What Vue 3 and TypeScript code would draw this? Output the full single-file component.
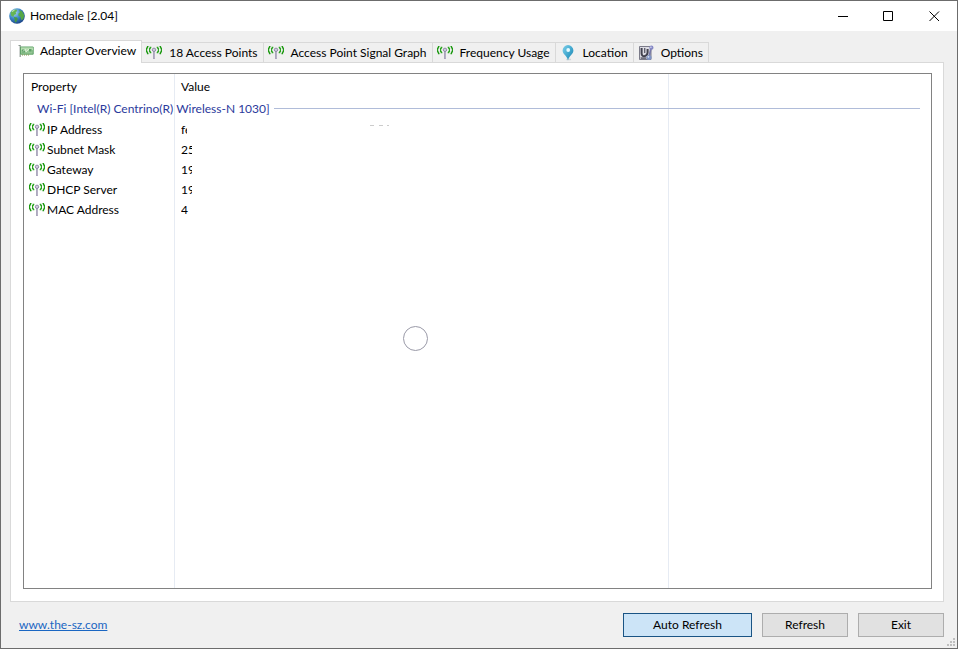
<script setup lang="ts">
import { ref } from 'vue'

interface Tab {
  label: string
  icon: 'card' | 'antenna' | 'pin' | 'options'
}

interface Property {
  name: string
  value: string
  size: 'narrow' | 'wide'
}

const tabs: Tab[] = [
  { label: 'Adapter Overview', icon: 'card' },
  { label: '18 Access Points', icon: 'antenna' },
  { label: 'Access Point Signal Graph', icon: 'antenna' },
  { label: 'Frequency Usage', icon: 'antenna' },
  { label: 'Location', icon: 'pin' },
  { label: 'Options', icon: 'options' },
]

const properties: Property[] = [
  { name: 'IP Address', value: 'fe', size: 'narrow' },
  { name: 'Subnet Mask', value: '25', size: 'wide' },
  { name: 'Gateway', value: '19', size: 'wide' },
  { name: 'DHCP Server', value: '19', size: 'wide' },
  { name: 'MAC Address', value: '4', size: 'wide' },
]

const active = ref(0)
const autoRefresh = ref(true)
</script>

<template>
  <div class="window">
    <svg class="symbols" aria-hidden="true">
      <symbol id="antenna" viewBox="0 0 16 16">
        <path d="M2.5 1.5H1.5V3H.6V7H1.5V8.6H2.5M13.5 1.5H14.5V3H15.4V7H14.5V8.6H13.5" fill="none" stroke="#1f9a14" stroke-width="1.2" />
        <path d="M5.3 2.3H4.2V3.5H3.6V6.5H4.2V7.7H5.3M10.7 2.3H11.8V3.5H12.4V6.5H11.8V7.7H10.7" fill="none" stroke="#2ba520" stroke-width="1.2" />
        <path d="M8 6V14" stroke="#9a94ae" stroke-width="1.7" />
        <path d="M8.3 6V13.5" stroke="#c4c0d2" stroke-width=".6" />
        <circle cx="8" cy="4.8" r="1.7" fill="#d0cddd" stroke="#8984a0" stroke-width=".9" />
      </symbol>
      <symbol id="card" viewBox="0 0 16 16">
        <path d="M.5 2.5H2.2V14" fill="none" stroke="#8b9790" stroke-width="1.2" />
        <path d="M2.5 4H15.2V11.2H2.5Z" fill="#94c694" stroke="#5fa268" />
        <path d="M3 4.5H15V7L8 8L3 7Z" fill="#b5dcb0" />
        <path d="M4 6.5H7V9.5H4ZM11 6H13.5V8.5H11Z" fill="#5fa169" />
        <path d="M5 8.5L7.5 6L8 9L11 6" fill="none" stroke="#d9eed5" />
        <path d="M4 12H12" stroke="#87974e" stroke-dasharray="1 1" />
      </symbol>
      <symbol id="pin" viewBox="0 0 16 16">
        <defs>
          <linearGradient id="drop" x1="0" y1="0" x2="1" y2="1">
            <stop offset="0" stop-color="#7fd0ea" />
            <stop offset=".55" stop-color="#3fa6cd" />
            <stop offset="1" stop-color="#1f7fa8" />
          </linearGradient>
        </defs>
        <ellipse cx="8.6" cy="14.4" rx="2.6" ry=".9" fill="#cfd5d9" />
        <path d="M8 15.4C7.4 13 6.4 11.8 4.9 10C3.6 8.5 2.6 7.4 2.6 5.5A5.4 5.4 0 0 1 13.4 5.5C13.4 7.4 12.4 8.5 11.1 10C9.6 11.8 8.6 13 8 15.4Z" fill="url(#drop)" />
        <circle cx="8.2" cy="5" r="1.9" fill="#e7fbff" />
      </symbol>
      <symbol id="options" viewBox="0 0 16 16">
        <path d="M1.5 1.5H13V14.5H1.5Z" fill="#b4b4bf" stroke="#7b7b89" />
        <path d="M2 2H12V12H2Z" fill="#dcdce3" />
        <path d="M3.6 3V8.5C3.6 10.5 5 11.5 7 11C8.6 10.6 9.4 9.4 9.6 7.5V4" fill="none" stroke="#42424f" stroke-width="2" />
        <path d="M6.7 3V8M3 13.2H8" stroke="#5c5c6b" stroke-width="1.3" />
        <path d="M13 3L11 12" stroke="#7778a8" stroke-width="1.6" />
        <circle cx="13.4" cy="2.7" r="2.1" fill="#8588c4" />
        <circle cx="11" cy="12.5" r="2.5" fill="#7f94c4" />
        <circle cx="12.9" cy="2.2" r=".8" fill="#d8daf3" />
        <circle cx="10.4" cy="11.8" r=".9" fill="#d8e4f6" />
      </symbol>
    </svg>

    <header class="titlebar">
      <svg class="globe" viewBox="0 0 16 16" aria-hidden="true">
        <defs>
          <radialGradient id="sea" cx="35%" cy="28%" r="75%">
            <stop offset="0" stop-color="#b4dcf6" />
            <stop offset=".5" stop-color="#3f8bc9" />
            <stop offset="1" stop-color="#1c4589" />
          </radialGradient>
        </defs>
        <circle cx="8" cy="8" r="7.8" fill="url(#sea)" />
        <path d="M1.6 4.5L4 2L7.5 1.5L8.2 3L6.7 4.2L7.2 6L5 7L4.5 9L2.2 7.8Z" fill="#65b553" />
        <path d="M5 9L8 9.5L8.8 11L7 14.5L5.8 14L5.6 11.3Z" fill="#479a42" />
        <path d="M10 2L13 3.3L15.2 7L14.4 11L12.5 12.3L11.4 9L9.3 7.5L9.5 5.4L11 4.2Z" fill="#55a746" />
        <path d="M3 3.5L5.5 2.2" stroke="#d1efbe" />
      </svg>
      <h1>Homedale [2.04]</h1>
      <button class="caption" type="button" aria-label="Minimize">
        <svg viewBox="0 0 11 11"><path d="M1 5.5H11" /></svg>
      </button>
      <button class="caption" type="button" aria-label="Maximize">
        <svg viewBox="0 0 11 11"><path d="M.5 .5H9.5V9.5H.5Z" /></svg>
      </button>
      <button class="caption" type="button" aria-label="Close">
        <svg viewBox="0 0 11 11"><path d="M.5 .5L10 10M10 .5L.5 10" /></svg>
      </button>
    </header>

    <main>
      <div class="tabs" role="tablist">
        <button
          v-for="(tab, i) in tabs"
          :key="tab.label"
          type="button"
          role="tab"
          class="tab"
          :class="{ active: active === i }"
          :aria-selected="active === i"
          @click="active = i"
        >
          <svg class="icon" aria-hidden="true"><use :href="'#' + tab.icon" /></svg>
          <span>{{ tab.label }}</span>
        </button>
      </div>

      <section class="panel" role="tabpanel">
        <div class="list">
          <table>
            <colgroup>
              <col class="col-property" />
              <col class="col-value" />
              <col />
            </colgroup>
            <thead>
              <tr>
                <th scope="col">Property</th>
                <th scope="col">Value</th>
                <td></td>
              </tr>
            </thead>
            <tbody>
              <tr class="group">
                <th colspan="3" scope="rowgroup">
                  <div class="group-title">Wi-Fi [Intel(R) Centrino(R) Wireless-N 1030]</div>
                </th>
              </tr>
              <tr v-for="item in properties" :key="item.name">
                <td>
                  <div class="name">
                    <svg class="icon" aria-hidden="true"><use href="#antenna" /></svg>
                    <span>{{ item.name }}</span>
                  </div>
                </td>
                <td><div class="value" :class="item.size">{{ item.value }}</div></td>
                <td></td>
              </tr>
            </tbody>
          </table>
          <svg class="specks" viewBox="0 0 20 2" aria-hidden="true">
            <path d="M1 .5H5M10 .5H14M18 .5H20" />
          </svg>
          <div class="ring"></div>
        </div>
      </section>
    </main>

    <footer>
      <a href="#">www.the-sz.com</a>
      <button
        type="button"
        class="push auto"
        :class="{ pressed: autoRefresh }"
        :aria-pressed="autoRefresh"
        @click="autoRefresh = !autoRefresh"
      >Auto Refresh</button>
      <button type="button" class="push">Refresh</button>
      <button type="button" class="push">Exit</button>
    </footer>

    <svg class="grip" viewBox="0 0 8 8" aria-hidden="true">
      <path d="M6 0h2v2H6zM3 3h2v2H3zM6 3h2v2H6zM0 6h2v2H0zM3 6h2v2H3zM6 6h2v2H6z" />
    </svg>
  </div>
</template>

<style>
body {
  margin: 0;
}
</style>

<style scoped>
.window {
  position: relative;
  box-sizing: border-box;
  display: flex;
  flex-direction: column;
  min-height: 100vh;
  border: 1px solid #6c6c6c;
  background: #f0f0f0;
  color: #000;
  font: 12px/16px "Segoe UI", Lato, "Open Sans", sans-serif;
}

.symbols {
  position: absolute;
  width: 0;
  height: 0;
}

button {
  box-sizing: border-box;
  margin: 0;
  padding: 0;
  border: 0;
  background: none;
  color: inherit;
  font: inherit;
}

.icon {
  flex: none;
  width: 16px;
  height: 16px;
}

.titlebar {
  display: flex;
  align-items: center;
  height: 30px;
  padding-left: 8px;
  background: #fff;
}

.globe {
  width: 16px;
  height: 16px;
}

h1 {
  flex: 1;
  margin: 0 0 0 5px;
  font: inherit;
}

.caption {
  display: flex;
  align-items: center;
  justify-content: center;
  width: 46px;
  height: 30px;
}

.caption svg {
  width: 11px;
  height: 11px;
  fill: none;
  stroke: #000;
}

main {
  flex: 1;
  display: flex;
  flex-direction: column;
  padding: 9px 13px 0 9px;
}

.tabs {
  display: flex;
  align-items: flex-end;
}

.tab {
  display: flex;
  align-items: center;
  gap: 7px;
  height: 20px;
  padding: 0 5px 0 4px;
  border: 1px solid #d9d9d9;
  border-width: 1px 1px 0 0;
  white-space: nowrap;
}

.tab.active {
  z-index: 1;
  gap: 6px;
  height: 23px;
  margin-bottom: -1px;
  padding: 0 5px 2px 7px;
  border-left-width: 1px;
  background: #fff;
}

.panel {
  flex: 1;
  display: flex;
  padding: 10px 11px 12px 12px;
  border: 1px solid #d9d9d9;
  background: #fff;
}

.list {
  position: relative;
  flex: 1;
  border: 1px solid #828282;
  background:
    linear-gradient(#e6ebf3, #e6ebf3) 150px 0 / 1px 100% no-repeat,
    linear-gradient(#e6ebf3, #e6ebf3) 644px 0 / 1px 100% no-repeat,
    #fff;
}

table {
  width: 100%;
  table-layout: fixed;
  border-collapse: collapse;
}

.col-property {
  width: 150px;
}

.col-value {
  width: 494px;
}

th,
td {
  height: 20px;
  padding: 0;
  text-align: left;
  font-weight: normal;
}

thead th {
  height: 25px;
  padding-left: 7px;
}

.group th {
  height: 19px;
  padding-bottom: 2px;
}

.group-title {
  display: flex;
  align-items: center;
  gap: 4px;
  padding: 0 11px 0 13px;
  color: #2b3a9c;
}

.group-title::after {
  content: "";
  flex: 1;
  height: 1px;
  background: #b0bcd9;
}

.name {
  display: flex;
  align-items: center;
  gap: 2px;
  padding-left: 5px;
}

.value {
  margin-left: 7px;
  overflow: hidden;
}

.narrow {
  width: 6px;
}

.wide {
  width: 11px;
}

.specks {
  position: absolute;
  top: 51px;
  left: 345px;
  width: 20px;
  height: 2px;
  stroke: #ccc;
}

.ring {
  position: absolute;
  top: 252px;
  left: 379px;
  box-sizing: border-box;
  width: 25px;
  height: 25px;
  border: 1px solid #9a9aa8;
  border-radius: 50%;
}

footer {
  display: flex;
  align-items: center;
  gap: 10px;
  padding: 11px 13px 11px 18px;
}

footer a {
  margin-right: auto;
  color: #1a66c2;
}

.push {
  width: 86px;
  height: 24px;
  border: 1px solid #adadad;
  background: #e1e1e1;
}

.auto {
  width: 129px;
}

.pressed {
  border-color: #1a5484;
  background: #cce4f7;
}

.grip {
  position: absolute;
  right: 2px;
  bottom: 2px;
  width: 8px;
  height: 8px;
  fill: #bfbfbf;
}
</style>
